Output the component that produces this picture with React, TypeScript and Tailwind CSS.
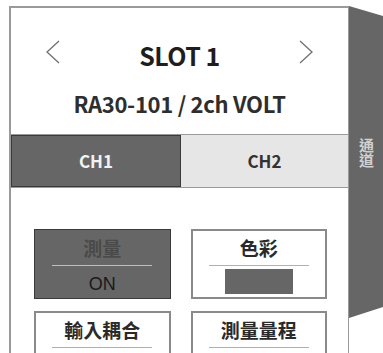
import React from "react";

const font = "font-['Noto_Sans_CJK_TC','Noto_Sans',sans-serif]";

function Chevron({ dir }: { dir: "left" | "right" }) {
  const pts = dir === "left" ? "14,1 2,12 14,23" : "2,1 14,12 2,23";
  return (
    <svg width="16" height="24" viewBox="0 0 16 24" fill="none" className="shrink-0">
      <polyline points={pts} stroke="#707070" strokeWidth="1.3" />
    </svg>
  );
}

function Card({ label, dark, children }: { label: string; dark?: boolean; children?: React.ReactNode }) {
  return (
    <div
      className={
        dark
          ? "h-[70px] flex flex-col items-center border border-[#3a3a3a] bg-[#666666]"
          : "h-[70px] flex flex-col items-center border-2 border-[#8a8a8a] bg-white"
      }
    >
      <div
        className={
          "shrink-0 h-[24px] leading-[24px] text-[19px] font-bold " +
          (dark ? "mt-[6px] text-[#4a4a4a]" : "mt-[5px] text-[#2a2a2a]")
        }
      >
        {label}
      </div>
      <div className={"shrink-0 mt-[5px] w-[100px] h-px " + (dark ? "bg-[#bdbdbd]" : "bg-[#b0b0b0]")} />
      {children}
    </div>
  );
}

export default function App() {
  return (
    <div className={"w-[383px] h-[353px] overflow-hidden bg-white flex items-start " + font}>
      <div className="ml-[9px] mt-[6px] w-[340px] border-l-2 border-t-2 border-r border-[#9a9a9a] flex flex-col shrink-0">
        <div className="shrink-0 h-[30px] mt-[32px] flex items-start justify-between px-[34px]">
          <Chevron dir="left" />
          <div className="text-[25px] leading-[30px] font-bold text-[#1e1e1e] tracking-[-0.5px]">SLOT 1</div>
          <Chevron dir="right" />
        </div>
        <div className="shrink-0 text-center text-[22px] font-semibold text-[#2e2e2e] leading-[22px] mt-[22px] tracking-[-0.3px]">
          RA30-101 / 2ch VOLT
        </div>
        <div className="shrink-0 mt-[20px] h-[54px] flex border-t border-b border-[#9a9a9a]">
          <div className="w-[170px] flex items-center justify-center bg-[#666666] border border-[#3a3a3a] text-[17px] font-bold text-[#f2f2f2]">
            CH1
          </div>
          <div className="flex-1 flex items-center justify-center bg-[#e6e6e6] text-[17px] font-bold text-[#333333]">
            CH2
          </div>
        </div>
        <div className="shrink-0 mt-[41px] pl-[23px] pr-[21px] pb-[20px] grid grid-cols-2 gap-x-[20px] gap-y-[12px]">
          <Card label="測量" dark>
            <div className="mt-[7px] text-[18px] leading-[22px] text-[#1a1a1a] font-['Liberation_Sans',sans-serif]">ON</div>
          </Card>
          <Card label="色彩">
            <div className="mt-[3px] w-[68px] h-[25px] bg-[#666666]" />
          </Card>
          <Card label="輸入耦合" />
          <Card label="測量量程" />
        </div>
      </div>
      <div className="mt-[6px] w-[34px] h-[312px] bg-[#666666] shrink-0 flex items-start justify-center [clip-path:polygon(0_0,100%_10px,100%_301px,0_312px)]">
        <div className="mt-[132px] [writing-mode:vertical-rl] text-[15px] font-bold text-[#d0d0d0] leading-[16px]">
          通道
        </div>
      </div>
    </div>
  );
}
